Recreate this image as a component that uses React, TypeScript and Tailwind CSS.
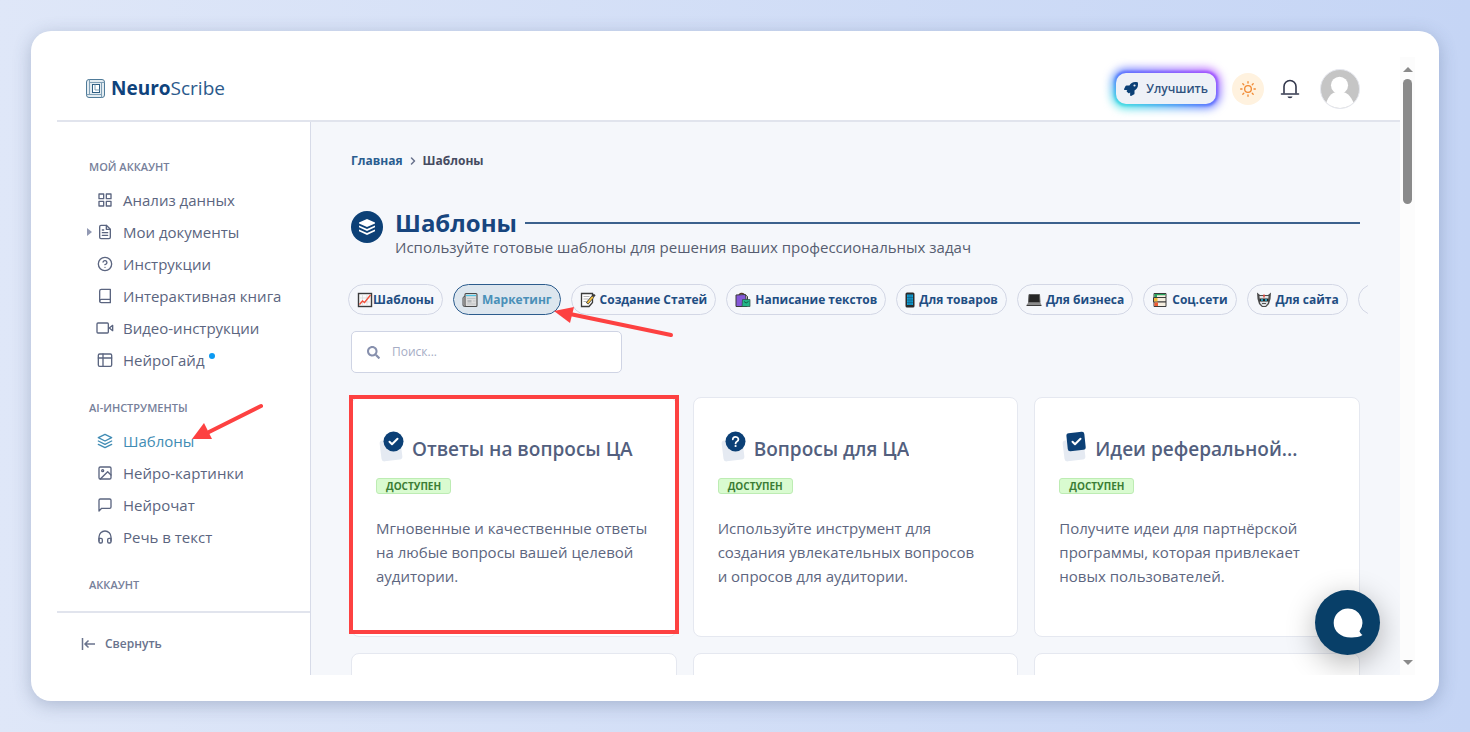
import { useState } from 'react';
import type { ReactNode } from 'react';
import {
  FiBook,
  FiChevronRight,
  FiFileText,
  FiGrid,
  FiHeadphones,
  FiHelpCircle,
  FiImage,
  FiLayers,
  FiMessageSquare,
  FiSun,
} from 'react-icons/fi';
import { FaRocket, FaSearch } from 'react-icons/fa';

interface NavEntry {
  label: string;
  icon: ReactNode;
  expandable?: boolean;
  isNew?: boolean;
}

interface Template {
  title: string;
  text: string;
  icon: 'check' | 'question' | 'checkbox';
}

const TableIcon = () => (
  <svg viewBox="0 0 24 24" className="size-4" fill="none" stroke="currentColor" strokeWidth="2" strokeLinecap="round" strokeLinejoin="round">
    <rect x="2" y="3" width="20" height="18.500" rx="2" />
    <path d="M2 9h20M9 3v18.500" />
  </svg>
);

const VideoIcon = () => (
  <svg viewBox="0 0 24 24" className="size-4 overflow-visible" fill="none" stroke="currentColor" strokeWidth="2" strokeLinecap="round" strokeLinejoin="round">
    <rect x="0" y="4.500" width="17" height="15" rx="1.500" />
    <path d="M23.500 8v8L18.500 12z" />
  </svg>
);

const BellIcon = () => (
  <svg viewBox="0 0 20 22" className="h-[22px] w-5" fill="none" stroke="currentColor" strokeWidth="1.600" strokeLinejoin="round">
    <path d="M4 15.500V8.500a6 6 0 0 1 12 0v7" />
    <path d="M1.500 16h17" strokeLinecap="round" />
    <path d="M7.500 18.500h5a2.500 1.700 0 0 1-5 0z" fill="currentColor" stroke="none" />
  </svg>
);

const ACCOUNT_LINKS: NavEntry[] = [
  { label: 'Анализ данных', icon: <FiGrid /> },
  { label: 'Мои документы', icon: <FiFileText />, expandable: true },
  { label: 'Инструкции', icon: <FiHelpCircle /> },
  { label: 'Интерактивная книга', icon: <FiBook /> },
  { label: 'Видео-инструкции', icon: <VideoIcon /> },
  { label: 'НейроГайд', icon: <TableIcon />, isNew: true },
];

const AI_LINKS: NavEntry[] = [
  { label: 'Шаблоны', icon: <FiLayers /> },
  { label: 'Нейро-картинки', icon: <FiImage /> },
  { label: 'Нейрочат', icon: <FiMessageSquare /> },
  { label: 'Речь в текст', icon: <FiHeadphones /> },
];

const ChartEmoji = () => (
  <svg viewBox="0 0 16 16" className="size-4 shrink-0">
    <rect x="1.5" y="1.5" width="13" height="13" fill="#fafafa" stroke="#3b3b3b" strokeWidth="1.4" />
    <path d="M5.5 2v12M10 2v12M2 6h12M2 10h12" stroke="#d5d5d5" strokeWidth=".7" />
    <path d="M2.5 12.5 5.5 9l2 1.5L13.5 3" fill="none" stroke="#f2503b" strokeWidth="1.3" />
  </svg>
);

const NewspaperEmoji = () => (
  <svg viewBox="0 0 16 16" className="size-4 shrink-0">
    <path d="M1 5.5 3.5 3.5v11H2.5A1.5 1.5 0 0 1 1 13z" fill="#d8d8d8" stroke="#4a4a4a" />
    <rect x="3" y="1.5" width="12" height="13" rx="1" fill="#dcdcdc" stroke="#4a4a4a" strokeWidth="1.1" />
    <path d="M4 3.500h10" stroke="#4cc4e4" strokeWidth="1.300" />
    <path d="M5 6.500h8.500M11 9h2.500M5 12h8.500" stroke="#bfc2c4" />
    <path d="M5.500 8h4v2.500h-4z" fill="#b3b7ba" />
  </svg>
);

const MemoEmoji = () => (
  <svg viewBox="0 0 16 16" className="size-4 shrink-0">
    <path d="M1.500 1.500h11v9l-3.500 4H1.500z" fill="#fff" stroke="#3b3b3b" strokeWidth="1.300" />
    <path d="M3.500 4.500h6M3.500 7h5M3.500 9.500h3" stroke="#b5b5b5" />
    <path d="m7 11.500 6-7" stroke="#3b3b3b" strokeWidth="3" />
    <path d="m7.500 11 5.300-6.200" stroke="#f7c443" strokeWidth="1.800" />
    <path d="m13 4.500 1.700-2" stroke="#3b3b3b" strokeWidth="2.500" />
  </svg>
);

const BagsEmoji = () => (
  <svg viewBox="0 0 16 16" className="size-4 shrink-0">
    <path d="M4 4.500C4 .5 9 .5 9.500 4" fill="none" stroke="#5a3a22" strokeWidth="1.300" />
    <path d="m1 3 9.500-.5L12 14.500H1z" fill="#8558d8" stroke="#3b3b3b" />
    <path d="m10.500 3 2 1.500V10" fill="none" stroke="#3b3b3b" />
    <path d="M7.500 7.500h7.500v7H7z" fill="#22b586" stroke="#2f4a42" strokeWidth=".7" />
    <path d="M9 9.500q2 3 4.500 0" fill="none" stroke="#12624a" />
  </svg>
);

const PhoneEmoji = () => (
  <svg viewBox="0 0 10 16" className="h-4 w-2.5 shrink-0">
    <rect x=".5" y=".5" width="9" height="15" rx="1.500" fill="#2b2b2b" />
    <rect x="2" y="2.500" width="6" height="10.500" fill="#0f9ed5" />
    <path d="M2 5.500h6M2 8h6M2 10.500h6M4 2.500V13M6 2.500V13" stroke="#14506e" strokeWidth=".5" />
  </svg>
);

const LaptopEmoji = () => (
  <svg viewBox="0 0 16 16" className="size-4 shrink-0">
    <path d="M3 2.500h10.500l.5 8H2.500z" fill="#262626" stroke="#5c5c5c" />
    <path d="M2.300 10.500h12L15.500 13H.5z" fill="#8b8b8b" />
    <path d="M.5 13h15v1H.5z" fill="#3a3a3a" />
  </svg>
);

const BooksEmoji = () => (
  <svg viewBox="0 0 16 16" className="size-4 shrink-0">
    <path d="M2 1.500h12v4H2z" fill="#f5eee0" stroke="#3b3b3b" />
    <path d="M1.500 5.500h12.500v4.500H1.500z" fill="#f5eee0" stroke="#3b3b3b" />
    <path d="M2 10h12v4.500H2z" fill="#f5eee0" stroke="#3b3b3b" />
    <path d="M2.500 2h11v1.300h-11zM2.500 2H5v3H2.500z" fill="#27a35c" />
    <path d="M2 6h3.500v3.500H2z" fill="#f2b93a" />
    <path d="M2.500 10.500H6V14H2.500z" fill="#ee5b33" />
  </svg>
);

const RobotEmoji = () => (
  <svg viewBox="0 0 16 16" className="size-4 shrink-0">
    <path d="M1 .5 4 3h8l3-2.500-.5 6.500-1.500 5-3 3H6l-3-3L1.500 7z" fill="#4a4a4a" />
    <path d="M3.500 4h9L12 11l-2.500 3h-3L4 11z" fill="#dfe3e6" />
    <path d="M3.500 6.500h9v3h-9z" fill="#222" />
    <circle cx="6" cy="8" r="1" fill="#28bde8" />
    <circle cx="10" cy="8" r="1" fill="#28bde8" />
    <path d="M8 2.500v3" stroke="#e8483b" strokeWidth="1.500" />
    <path d="M6 11.500h4" stroke="#555" />
  </svg>
);

const CATEGORIES = [
  { label: 'Шаблоны', icon: <ChartEmoji />, gap: 'gap-0' },
  { label: 'Маркетинг', icon: <NewspaperEmoji />, gap: 'gap-1' },
  { label: 'Создание Статей', icon: <MemoEmoji />, gap: 'gap-1' },
  { label: 'Написание текстов', icon: <BagsEmoji />, gap: 'gap-1' },
  { label: 'Для товаров', icon: <PhoneEmoji />, gap: 'gap-1' },
  { label: 'Для бизнеса', icon: <LaptopEmoji />, gap: 'gap-1' },
  { label: 'Соц.сети', icon: <BooksEmoji />, gap: 'gap-1' },
  { label: 'Для сайта', icon: <RobotEmoji />, gap: 'gap-1' },
];

const TEMPLATES: Template[] = [
  {
    title: 'Ответы на вопросы ЦА',
    text: 'Мгновенные и качественные ответы на любые вопросы вашей целевой аудитории.',
    icon: 'check',
  },
  {
    title: 'Вопросы для ЦА',
    // non-breaking space keeps the conjunction with its word
    text: 'Используйте инструмент для создания увлекательных вопросов и\u00a0опросов для аудитории.',
    icon: 'question',
  },
  {
    title: 'Идеи реферальной...',
    text: 'Получите идеи для партнёрской программы, которая привлекает новых пользователей.',
    icon: 'checkbox',
  },
];

const Logo = () => (
  <svg viewBox="0 0 19 19" className="size-[19px]" fill="none" stroke="#4f7b99">
    <rect x=".5" y=".5" width="18" height="18" rx="2.500" fill="#e4ecf1" />
    <path d="M3.500 .5v15M.5 15.500h15M15.500 3.500v15M3.500 3.500h15" stroke="#7f9fb5" />
    <rect x="6.500" y="5.500" width="7" height="8" fill="#fff" stroke="#2f5f83" />
    <path d="M9 5.500v5.500h4.500" stroke="#7f9fb5" />
  </svg>
);

const TemplateIcon = ({ kind }: { kind: Template['icon'] }) => (
  <svg viewBox="0 0 36 36" className="size-9 shrink-0" fill="none" strokeLinecap="round" strokeLinejoin="round">
    <rect x="4.500" y="8.500" width="21" height="21" rx="3" fill="#e5eaf2" transform="rotate(-7 15 19)" />
    {kind === 'checkbox' ? (
      <rect x="8" y="1.500" width="18" height="18" rx="2.500" fill="#0c4076" transform="rotate(-6 17 10)" />
    ) : (
      <circle cx="17.500" cy="10.500" r="10" fill="#0c4076" />
    )}
    {kind === 'question' ? (
      <>
        <path d="M14.800 8.300a2.800 2.500 0 1 1 4.200 2.200c-1 .6-1.400 1-1.400 1.900" stroke="#fff" strokeWidth="1.800" />
        <circle cx="17.600" cy="15" r="1.100" fill="#fff" />
      </>
    ) : (
      <path d="m13.500 10.800 2.500 2.500 5.500-5.500" stroke="#fff" strokeWidth="2" />
    )}
  </svg>
);

const NavList = ({ title, items, active }: { title: string; items: NavEntry[]; active: string }) => (
  <section className="mb-6">
    <h2 className="mb-[9px] pl-8 text-[11px] leading-4 font-semibold text-[#76809a] uppercase">{title}</h2>
    <ul>
      {items.map((item) => (
        <li key={item.label}>
          <a
            href="#"
            className={`relative flex h-8 items-center gap-2.5 pl-10 text-[15px] font-medium whitespace-nowrap ${
              item.label === active ? 'text-[#418cb4]' : 'text-[#5b6580]'
            }`}
          >
            {item.expandable && (
              <span className="absolute left-[30px] border-y-4 border-l-5 border-y-transparent border-l-[#9299b3]" />
            )}
            <span className="text-[16px]">{item.icon}</span>
            <span className="relative">
              {item.label}
              {item.isNew && <span className="absolute top-1 left-full ml-1 size-1.5 rounded-full bg-[#0c9af2]" />}
              {item.label === active && (
                <svg viewBox="0 0 72 38" className="absolute bottom-1/2 left-full z-10 h-[38px] w-[72px] overflow-visible">
                  <path d="M67 3 15 29" stroke="#fd4141" strokeWidth="4" strokeLinecap="round" />
                  <path d="M-2 36 10 20l8 16z" fill="#fd4141" />
                </svg>
              )}
            </span>
          </a>
        </li>
      ))}
    </ul>
  </section>
);

const Header = () => (
  <header className="flex h-[65px] shrink-0 items-center justify-between border-b-2 border-[#e1e4ed] pr-10 pl-[29px]">
    <a href="#" className="flex items-center gap-1.5 text-[19px] text-[#2b5a8c]">
      <Logo />
      <span>
        <b className="text-[#0f437c]">Neuro</b>Scribe
      </span>
    </a>
    <div className="flex items-center gap-4">
      <div className="relative">
        <span className="absolute -inset-1 rounded-[14px] bg-gradient-to-tr from-[#2ff5d8] via-[#5b74ff] to-[#c04dff] blur-[5px]" />
        <span className="absolute -inset-0.5 rounded-[12px] bg-gradient-to-tr from-[#3fe8dc] via-[#5b74ff] to-[#a84dff] blur-[1px]" />
        <button className="relative flex h-[31px] items-center gap-2 rounded-[10px] bg-[#eef1f7] px-2 text-[12px] font-semibold text-[#2f517f]">
          <FaRocket className="size-3.5 text-[#0c4076]" />
          Улучшить
        </button>
      </div>
      <button aria-label="Тема" className="flex size-8 items-center justify-center rounded-full bg-[#fff2df] text-[#f18a34]">
        <FiSun className="size-4" />
      </button>
      <button aria-label="Уведомления" className="flex size-5 items-center justify-center text-[#33384d]">
        <BellIcon />
      </button>
      <button aria-label="Профиль" className="ml-1 size-10 overflow-hidden rounded-full border border-[#e6e8ef] bg-[#c5c5c5]">
        <svg viewBox="0 0 40 40" fill="#fff">
          <circle cx="19.500" cy="16" r="9" />
          <path d="M5 36c3-10 8-13.500 14.500-13.500S31 26 35 36l-6 5H10z" />
        </svg>
      </button>
    </div>
  </header>
);

const Sidebar = () => (
  <aside className="flex w-[254px] shrink-0 flex-col border-r border-[#d7dbe8] bg-white">
    <nav className="min-h-0 flex-1 pt-[37px]">
      <NavList title="Мой аккаунт" items={ACCOUNT_LINKS} active="Шаблоны" />
      <NavList title="AI-инструменты" items={AI_LINKS} active="Шаблоны" />
      <NavList title="Аккаунт" items={[]} active="Шаблоны" />
    </nav>
    <button className="flex h-16 shrink-0 items-center gap-2.5 border-t-2 border-[#e1e4ed] bg-white pl-6 text-[12px] font-semibold text-[#69738d]">
      <svg viewBox="0 0 14 12" className="h-3 w-3.5" fill="none" stroke="currentColor" strokeWidth="1.500">
        <path d="M1.500 0v12M4 6h10M7.500 2.500 4 6l3.500 3.500" />
      </svg>
      Свернуть
    </button>
  </aside>
);

const TemplateCard = ({ template, highlighted }: { template: Template; highlighted: boolean }) => (
  <article className="relative min-h-60 rounded-lg border border-[#e5e8f0] bg-white px-6 pt-[33px]">
    <div className="flex items-center">
      <TemplateIcon kind={template.icon} />
      <h3 className="truncate text-[19px] font-semibold text-[#535f7e]">{template.title}</h3>
    </div>
    <div className="mt-[11px] flex">
      <span className="rounded-[3px] border border-[#bdecb3] bg-[#d9fbd0] px-[9px] text-[10px] leading-[14px] font-bold text-[#3b7d35] uppercase">
        Доступен
      </span>
    </div>
    <p className="mt-[22px] text-[15px] leading-6 text-[#5d6680]">{template.text}</p>
    {highlighted && <div className="absolute -inset-x-[3px] -top-[3px] bottom-0.5 border-4 border-[#fd4141]" />}
  </article>
);

export default function App() {
  const [category, setCategory] = useState('Маркетинг');
  const [query, setQuery] = useState('');

  const found = TEMPLATES.filter((t) => t.title.toLowerCase().includes(query.toLowerCase()));

  return (
    <div className="h-screen bg-gradient-to-r from-[#dfe7f8] to-[#c5d5f5] p-[31px] font-['Open_Sans',sans-serif]">
      <div className="h-full rounded-[20px] bg-white py-[26px] pr-6 pl-[26px] shadow-[0_4px_18px_rgba(60,80,120,0.3)]">
        <div className="flex h-full">
          <div className="relative flex min-w-0 flex-1 flex-col overflow-hidden">
            <Header />
            <div className="flex min-h-0 flex-1">
              <Sidebar />
              <main className="min-w-0 flex-1 overflow-hidden bg-[#f5f7fb] px-10 pt-[29px]">
                <nav className="flex items-center gap-1 text-[12px] leading-5 font-bold">
                  <a href="#" className="text-[#2a5d8f]">
                    Главная
                  </a>
                  <FiChevronRight className="size-3 text-[#68718c]" strokeWidth={3} />
                  <span className="text-[#454b60]">Шаблоны</span>
                </nav>

                <div className="mt-10 flex gap-3">
                  <span className="flex size-8 shrink-0 items-center justify-center rounded-full bg-[#0c4076]">
                    <svg viewBox="0 0 18 18" className="size-[18px]" fill="#fff">
                      <path d="M9 1 17 4.500v1L9 9 1 5.500v-1z" />
                      <path d="m1 7.500 8 3.500 8-3.500v1.800L9 13 1 9.300zM1 11.500 9 15l8-3.500v1.800L9 17l-8-3.700z" />
                    </svg>
                  </span>
                  <div className="min-w-0 flex-1">
                    <div className="flex items-center gap-2">
                      <h1 className="text-[24px] leading-6 font-bold text-[#17457e]">Шаблоны</h1>
                      <div className="h-0.5 flex-1 bg-[#3c618d]" />
                    </div>
                    <p className="text-[15px] leading-6 text-[#565d70]">
                      Используйте готовые шаблоны для решения ваших профессиональных задач
                    </p>
                  </div>
                </div>

                <div className="relative mt-[25px] -mr-2 -ml-[3px]">
                  <div className="flex gap-2.5 overflow-hidden">
                    {CATEGORIES.map((item) => (
                      <button
                        key={item.label}
                        onClick={() => setCategory(item.label)}
                        className={`flex h-[31px] shrink-0 items-center rounded-full border px-2 text-[12px] font-bold whitespace-nowrap ${item.gap} ${
                          item.label === category
                            ? 'border-[#2c5c8d] bg-[#dde6ee] text-[#4a90b8]'
                            : 'border-[#d3d7e5] text-[#1f4e83]'
                        }`}
                      >
                        {item.icon}
                        {item.label}
                      </button>
                    ))}
                    <button aria-label="Ещё" className="h-[31px] w-24 shrink-0 rounded-full border border-[#d3d7e5]" />
                  </div>
                  <svg viewBox="0 0 120 32" className="absolute top-[23px] left-[206px] z-10 h-8 w-[120px]">
                    <path d="M117 28 16 7" stroke="#fd4141" strokeWidth="4" strokeLinecap="round" />
                    <path d="M0 4 20 0l-4 16z" fill="#fd4141" />
                  </svg>
                </div>

                <label className="mt-4 flex h-[42px] w-[271px] items-center gap-3 rounded-[5px] border border-[#cfd4e4] bg-white px-[15px]">
                  <FaSearch className="size-[13px] text-[#8790ad]" />
                  <input
                    aria-label="Поиск"
                    placeholder="Поиск..."
                    value={query}
                    onChange={(e) => setQuery(e.target.value)}
                    className="min-w-0 flex-1 text-[12px] outline-none placeholder:text-[#a6acc5]"
                  />
                </label>

                <div className="mt-6 grid grid-cols-3 gap-4">
                  {found.map((template, index) => (
                    <TemplateCard key={template.title} template={template} highlighted={index === 0} />
                  ))}
                  {[0, 1, 2].map((n) => (
                    <div key={n} className="h-60 rounded-lg border border-[#e5e8f0] bg-white" />
                  ))}
                </div>
              </main>
            </div>
            <button
              aria-label="Чат"
              className="absolute right-5 bottom-5 flex size-[65px] items-center justify-center rounded-full bg-[#083f68] shadow-[0_8px_30px_rgba(0,0,0,0.3)]"
            >
              <svg viewBox="0 0 30 30" className="size-[30px]" fill="#fff">
                <path d="M15 .500a14.300 14.300 0 0 1 11.500 22.800c.5 1.500 1.500 2.700 3 3.700-2.500 1.800-7 2.500-10.500 2.500C8 30 .700 23.500.700 15A14.300 14.300 0 0 1 15 .500z" />
              </svg>
            </button>
          </div>

          {/* scroll track */}
          <div className="flex w-[15px] shrink-0 flex-col items-center bg-[#fcfcfc] pt-2.5 pb-2.5">
            <span className="border-x-5 border-b-5 border-x-transparent border-b-[#8a8a8a]" />
            <span className="mt-[7px] h-[125px] w-[9px] rounded-full bg-[#8a8a8a]" />
            <span className="mt-auto border-x-5 border-t-5 border-x-transparent border-t-[#8a8a8a]" />
          </div>
        </div>
      </div>
    </div>
  );
}
